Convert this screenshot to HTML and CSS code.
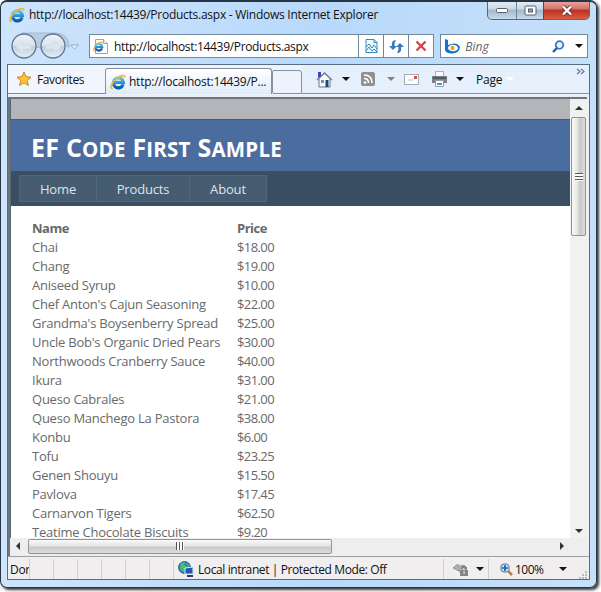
FILE: index.html
```html
<!DOCTYPE html>
<html lang="en">
<head>
<meta charset="utf-8">
<title>http://localhost:14439/Products.aspx - Windows Internet Explorer</title>
<link rel="stylesheet" href="styles.css">
</head>
<body>
<svg class="defs" aria-hidden="true">
  <defs>
    <linearGradient id="blue" x1="0" y1="0" x2="0" y2="1"><stop offset="0" stop-color="#58c7f2"/><stop offset="1" stop-color="#075baf"/></linearGradient>
    <symbol id="ie" viewBox="0 0 16 16">
      <path d="M13.2 10.3A5 5 0 1 1 13.4 8.4H5.2" fill="none" stroke="url(#blue)" stroke-width="3.2"/>
      <path d="M2.7 14.8C-.8 14.5 1.500 8.500 6.500 4.500 10.500 1.200 15.300.2 14.700 3.600" fill="none" stroke="#eeb72b" stroke-width="1.700"/>
    </symbol>
  </defs>
</svg>
<div class="window">
  <header class="titlebar">
    <svg class="title-icon" width="16" height="16"><use href="#ie"/></svg>
    <span class="title">http://localhost:14439/Products.aspx - Windows Internet Explorer</span>
    <div class="controls">
      <div class="control min"><svg width="14" height="8"><rect x="1.500" y="2.500" width="11" height="4" rx="1" fill="#fff" stroke="#526071"/></svg></div>
      <div class="control max"><svg width="13" height="11"><rect x="1" y="1" width="11" height="9" rx="1" fill="#fff" stroke="#526071"/><rect x="4.500" y="4" width="4" height="3" fill="#8ba1b8" stroke="#526071"/></svg></div>
      <div class="control close"><svg width="12" height="11"><path d="M2 1.500l8 8M10 1.500l-8 8" stroke="#633" stroke-width="4"/><path d="M2 1.500l8 8M10 1.500l-8 8" stroke="#fff" stroke-width="2.400"/></svg></div>
    </div>
  </header>
  <div class="address-row">
    <svg class="travel" width="70" height="30" viewBox="0 0 70 30">
      <defs><linearGradient id="orb" x1="0" y1="0" x2="0" y2="1"><stop stop-color="#edf3f8"/><stop offset=".48" stop-color="#d9e4ee"/><stop offset=".52" stop-color="#bdcedc"/><stop offset="1" stop-color="#e6f2fa"/></linearGradient></defs>
      <path d="M13 2h33q14 0 14 14-12-6-18 1h-9q-20-1-20-15" fill="#b9cde0" stroke="#a3b9cc"/>
      <circle cx="15" cy="15" r="12" fill="url(#orb)" stroke="#60798f" stroke-width="1.300"/>
      <circle cx="44" cy="15" r="12" fill="url(#orb)" stroke="#60798f" stroke-width="1.300"/>
      <path d="M7 16l7-6v4h8v4h-8v4zM52 16l-7-6v4h-8v4h8v4z" fill="#dde6ed" stroke="#d0dae3" stroke-width=".7"/>
      <path d="M61.500 14h8l-4 4z" fill="#eaf3fb" stroke="#8eacc6"/>
    </svg>
    <div class="address">
      <svg class="page-icon" width="16" height="17" viewBox="0 0 16 17"><path d="M2.500 1.500h8l4 4v10h-12z" fill="#fff" stroke="#a3a3a3"/><path d="M10.500 1.500v4h4" fill="#eee" stroke="#a3a3a3"/><svg x="0" y="3" width="11" height="11"><use href="#ie"/></svg></svg>
      <span class="url">http://localhost:14439/Products.aspx</span>
      <div class="tool"><svg width="13" height="14"><path d="M1 .5h8l3 3v10H1zM9 .5v3h3M1 8l3-3 3 4 2-3 3 4M1 12l3-4 3 4 2-2 3 3" fill="#effaff" stroke="#348abb"/></svg></div>
      <div class="tool"><svg width="17" height="15"><path d="M8 1Q3 1 4 7H1l4 4 4-4H6.500Q6 4 8 1z" fill="#3478bd"/><path d="M9 14q5 0 4-6h3l-4-4-4 4h2.500Q11 11 9 14z" fill="#3478bd"/></svg></div>
      <div class="tool"><svg width="12" height="12"><path d="M1.500 1.500l9 9M10.500 1.500l-9 9" stroke="#cf4444" stroke-width="2.300"/></svg></div>
    </div>
    <div class="search">
      <svg width="17" height="15"><path d="M1 0l3 1v5q9-4 12 2-1 7-9 6.500-6-.5-6-4z" fill="#1473cf"/><ellipse cx="9" cy="9" rx="5" ry="3.200" fill="#fff"/><circle cx="8.500" cy="9" r="2.200" fill="#f4a31b"/></svg>
      <span class="bing">Bing</span>
      <svg class="lens" width="13" height="13"><circle cx="7.500" cy="5" r="3.800" fill="#e9f5ff" stroke="#3c7ac2" stroke-width="1.800"/><path d="M5 8l-4 4" stroke="#245da8" stroke-width="2.400"/></svg>
      <i class="arrow"></i>
    </div>
  </div>
  <main class="inner">
    <div class="command-row">
      <div class="favorites">
        <svg width="16" height="16"><path d="M8 1l2 4.700 5 .5-3.800 3.300 1.200 5-4.400-2.700-4.500 2.700 1.300-5L1 6.200l5-.5z" fill="#ffc42e" stroke="#c78626"/></svg>
        <span class="fav-text">Favorites</span>
      </div>
      <div class="tab"><svg width="16" height="16"><use href="#ie"/></svg><span class="tab-text">http://localhost:14439/P...</span></div>
      <div class="new-tab"></div>
      <div class="commands">
        <svg class="home" width="17" height="17"><path d="M3 7v9h11V7L8.500 2z" fill="#f8fafc" stroke="#6d7682"/><path d="M1 9l7.500-7L16 9" fill="none" stroke="#788392" stroke-width="1.600"/><path d="M2 1h3v4L2 7z" fill="#3444c2"/><path d="M5 9h3v3H5z" fill="#5c9bc7"/><path d="M9.500 9h3v7h-3z" fill="#1d4973"/></svg>
        <i class="arrow a1"></i>
        <svg class="rss" width="14" height="14"><rect width="14" height="14" rx="2" fill="#919191"/><circle cx="4" cy="10.500" r="1.300" fill="#fff"/><path d="M3 6.500q4.500 0 4.500 4.500M3 3q8 0 8 8" fill="none" stroke="#fff" stroke-width="1.600"/></svg>
        <i class="arrow gray a2"></i>
        <svg class="mail" width="15" height="11"><rect x=".5" y=".5" width="14" height="10" fill="#fff" stroke="#a3adb9"/><path d="M10 2h3v3h-3z" fill="#d55044"/><path d="M4 6h5" stroke="#b7bdc6"/></svg>
        <svg class="print" width="17" height="16"><path d="M4.500.5h8v6h-8z" fill="#f9fafb" stroke="#a8afb7"/><path d="M1 5h15v7H1z" fill="#7a8085"/><path d="M2 7h13" stroke="#535b62" stroke-width="2"/><path d="M4.500 9.500h8v6h-8z" fill="#fff" stroke="#939da7"/><path d="M6 12h5v2H6z" fill="#469bc4"/></svg>
        <i class="arrow a3"></i>
        <span class="page">Page</span><i class="arrow white"></i>
        <svg class="chevrons" width="9" height="7"><path d="M1 1l3 2.500L1 6M5 1l3 2.500L5 6" fill="none" stroke="#6770ad" stroke-width="1.200"/></svg>
      </div>
    </div>
    <div class="viewport-frame">
      <div class="view">
        <div class="gray-band"></div>
        <div class="heading"><h1>EF C<small>ODE</small> F<small>IRST</small> S<small>AMPLE</small></h1></div>
        <nav><a class="nav-home">Home</a><a class="nav-products">Products</a><a class="nav-about">About</a></nav>
        <table>
          <thead><tr><th>Name</th><th>Price</th></tr></thead>
          <tbody>
            <tr><td>Chai</td><td>$18.00</td></tr>
            <tr><td>Chang</td><td>$19.00</td></tr>
            <tr><td>Aniseed Syrup</td><td>$10.00</td></tr>
            <tr><td>Chef Anton's Cajun Seasoning</td><td>$22.00</td></tr>
            <tr><td>Grandma's Boysenberry Spread</td><td>$25.00</td></tr>
            <tr><td>Uncle Bob's Organic Dried Pears</td><td>$30.00</td></tr>
            <tr><td>Northwoods Cranberry Sauce</td><td>$40.00</td></tr>
            <tr><td>Ikura</td><td>$31.00</td></tr>
            <tr><td>Queso Cabrales</td><td>$21.00</td></tr>
            <tr><td>Queso Manchego La Pastora</td><td>$38.00</td></tr>
            <tr><td>Konbu</td><td>$6.00</td></tr>
            <tr><td>Tofu</td><td>$23.25</td></tr>
            <tr><td>Genen Shouyu</td><td>$15.50</td></tr>
            <tr><td>Pavlova</td><td>$17.45</td></tr>
            <tr><td>Carnarvon Tigers</td><td>$62.50</td></tr>
            <tr><td>Teatime Chocolate Biscuits</td><td>$9.20</td></tr>
          </tbody>
        </table>
      </div>
      <div class="vscroll"><i class="sb up"></i><div class="vthumb"><i></i></div><i class="sb down"></i></div>
      <div class="hscroll"><i class="sb left"></i><div class="hthumb"><i></i></div><i class="sb right"></i></div>
      <div class="corner"></div>
    </div>
    <footer>
      <span class="done">Done</span>
      <i class="cell"></i><i class="cell"></i><i class="cell"></i><i class="cell"></i><i class="cell"></i><i class="cell"></i>
      <div class="zone">
        <svg width="16" height="16"><circle cx="6.500" cy="6.500" r="6" fill="#298bd0" stroke="#28649a"/><path d="M3 2l4-1-1 3 3 2-4 5-3-4zM9 2l3 3-2 1z" fill="#55bd57"/><path d="M7 7l8-1v7H7z" fill="#2356b2" stroke="#d2e9ff"/><path d="M9 15h6" stroke="#243b77" stroke-width="2"/></svg>
        <span class="zone-text">Local intranet | Protected Mode: Off</span>
      </div>
      <div class="privacy"><svg width="16" height="15"><path d="M0 6l5-4v3q5-4 9 1l-2 1Q9 4 6 8l2 2z" fill="#b1b1b1" stroke="#929292"/><path d="M9 8V6q2.500-3 4 0v2" fill="none" stroke="#777" stroke-width="1.400"/><rect x="7" y="8" width="8" height="6" fill="#858585"/><path d="M11 9v3" stroke="#eee"/></svg><i class="arrow"></i></div>
      <div class="zoom"><svg width="13" height="13"><path d="M8 8l4 4" stroke="#b7823d" stroke-width="2.500"/><circle cx="5" cy="5" r="4.200" fill="#cdeaff" stroke="#6c8da9" stroke-width="1.300"/><path d="M5 2v6M2 5h6" stroke="#2359b5" stroke-width="1.700"/></svg><span class="zoom-text">100%</span><i class="arrow"></i></div>
      <svg class="grip" width="8" height="8"><path d="M6 0h2v2H6zM3 3h2v2H3zM6 3h2v2H6zM0 6h2v2H0zM3 6h2v2H3zM6 6h2v2H6z" fill="#b6babd"/></svg>
    </footer>
  </main>
</div>
</body>
</html>
```
FILE: styles.css
```css
* { box-sizing: border-box; }
body { margin: 0; width: 601px; height: 592px; overflow: hidden; background: #fff; font-family: "Open Sans", "Noto Sans", sans-serif; font-size: 12px; color: #111; }
.defs { position: absolute; width: 0; height: 0; }
svg { display: block; flex: none; }
span { white-space: nowrap; }
.window { width: 597px; height: 588px; border: 1px solid #253545; border-top-width: 2px; border-radius: 7px; box-shadow: 2px 2px 3px #333; background: linear-gradient(90deg, #cde4fc, #b8d9fb 55%, #c6e0fa); padding: 0 6px 7px; overflow: hidden; display: flex; flex-direction: column; }
.titlebar { height: 29px; flex: none; display: flex; align-items: flex-start; }
.title-icon { margin: 5px 4px 0 2px; }
.title { font-size: 12px; line-height: 16px; margin-top: 5px; width: 350px; letter-spacing: -.26px; }
.controls { display: flex; margin: -1px 0 0 auto; width: 103px; height: 19px; border: 1px solid #586879; border-top: 0; border-radius: 0 0 5px 5px; overflow: hidden; background: linear-gradient(#e4edf6, #cbd8e5 45%, #a1b7cb 50%, #c8dbea); }
.control { display: flex; align-items: center; justify-content: center; }
.min { width: 28px; }
.max { width: 27px; border-left: 1px solid #718194; }
.close { flex: 1; border-left: 1px solid #604044; background: linear-gradient(#e9aaa0, #d57166 45%, #b92f25 50%, #d85d3e); }
.address-row { height: 33px; flex: none; display: flex; padding: 3px 2px 0; }
.travel { margin: -3px 10px 0 0; }
.address { width: 346px; height: 24px; border: 1px solid #71889d; background: #fff; display: flex; align-items: center; }
.page-icon { margin: 0 5px 0 3px; }
.url { flex: 1; font-size: 12px; letter-spacing: -.33px; }
.tool { width: 25px; height: 22px; border-left: 1px solid #71889d; display: flex; align-items: center; justify-content: center; }
.search { margin-left: 6px; width: 148px; height: 24px; border: 1px solid #71889d; background: #fff; display: flex; align-items: center; padding-left: 3px; }
.bing { font-size: 12px; font-style: italic; color: #666; margin-left: 4px; }
.lens { margin-left: auto; margin-right: 10px; }
.arrow { flex: none; width: 0; height: 0; border: 4px solid transparent; border-top-color: #111; border-bottom: 0; }
.search .arrow { margin-right: 4px; }
.inner { flex: 1; min-height: 0; border: 1px solid #566d82; background: #edf4fd; display: flex; flex-direction: column; }
.command-row { height: 32px; flex: none; display: flex; border-bottom: 2px solid #e8eef8; }
.favorites { width: 97px; height: 29px; border-bottom: 1px solid #808c99; display: flex; align-items: center; padding-left: 8px; background: #f1f6fe; }
.fav-text { margin-left: 5px; font-size: 12px; letter-spacing: -.4px; }
.tab { width: 167px; height: 26px; margin-top: 3px; border: 1px solid #8590a0; border-bottom: 0; border-radius: 3px 3px 0 0; display: flex; align-items: center; padding-left: 4px; background: linear-gradient(#fff, #dfebfa); }
.tab-text { margin-left: 3px; letter-spacing: -.25px; }
.new-tab { width: 30px; height: 24px; margin-top: 5px; border: 1px solid #8590a0; border-radius: 2px 3px 0 2px; background: #edf3fd; }
.commands { flex: 1; height: 29px; border-bottom: 1px solid #8590a0; background: #e6effc; display: flex; align-items: center; padding-left: 14px; }
.a1 { margin: 0 11px 0 9px; }
.gray { border-top-color: #7e8288; }
.a2 { margin: 0 9px 0 12px; }
.print { margin-left: 12px; }
.a3 { margin: 0 12px 0 8px; }
.page { font-size: 12px; width: 27px; letter-spacing: -.2px; }
.white { border-top-color: #fff; margin-left: 3px; }
.chevrons { margin: -15px 4px 0 auto; }
.viewport-frame { height: 459px; flex: none; margin: 0 2px 0 0; border: 2px solid #71757a; border-right: 0; border-bottom: 0; display: grid; grid-template: 439px 18px / 560px 19px; background: #eee; }
.view { background: #fff; overflow: hidden; border-left: 1px solid #536676; }
.gray-band { height: 20px; background: #b4b5b9; }
.heading { height: 52px; background: #4b6c9f; border-top: 1px solid #395c8e; padding-left: 20px; }
h1 { margin: 0; color: #fff; font-size: 25px; line-height: 55px; font-weight: 700; letter-spacing: .22px; white-space: nowrap; }
h1 small { font-size: 20.5px; }
nav { height: 35px; background: #3a4f63; padding: 4px 8px; display: flex; }
nav a { display: flex; align-items: center; justify-content: center; height: 27px; border: 1px solid #4e677d; background: #465c71; color: #dde4ec; font-size: 13px; letter-spacing: -.15px; }
.nav-home { width: 78px; }
.nav-products { width: 93px; border-left: 0; }
.nav-about { width: 77px; border-left: 0; }
table { margin: 13px 0 0 21px; border-collapse: collapse; color: #696969; font-size: 13px; line-height: 19px; letter-spacing: -.23px; }
th, td { padding: 0; text-align: left; white-space: nowrap; height: 19px; }
th:first-child { width: 205px; }
td:last-child { letter-spacing: -.6px; }
th { font-weight: 700; letter-spacing: -.5px; }
.vscroll { display: flex; flex-direction: column; align-items: center; background: #f1f1f1; padding: 7px 2px 5px 0; }
.sb { flex: none; width: 0; height: 0; border: 4px solid transparent; }
.up { border-bottom-color: #333; border-top: 0; }
.down { border-top-color: #333; border-bottom: 0; margin-top: auto; }
.left { border-right-color: #333; border-left: 0; }
.right { border-left-color: #333; border-right: 0; margin-left: auto; }
.vthumb { width: 15px; height: 119px; margin-top: 7px; border: 1px solid #929292; border-radius: 2px; background: linear-gradient(90deg, #fafafa, #e8e8e8 40%, #c8c8c8 60%, #ddd); display: flex; align-items: center; justify-content: center; }
.vthumb i { width: 8px; height: 8px; background: repeating-linear-gradient(#555 0 1px, #fff 1px 3px); }
.hscroll { display: flex; align-items: center; background: #eee; padding: 0 6px 2px; }
.hthumb { width: 304px; height: 15px; margin-left: 8px; border: 1px solid #929292; border-radius: 2px; background: linear-gradient(#fafafa, #e4e4e4 45%, #c9c9c9 55%, #ddd); display: flex; align-items: center; justify-content: center; }
.hthumb i { width: 8px; height: 8px; background: repeating-linear-gradient(90deg, #555 0 1px, #fff 1px 3px); }
.corner { background: #eee; }
footer { flex: 1; min-height: 0; border-top: 1px solid #9aa0a5; background: #f0eeef; display: flex; align-items: center; padding: 2px 0 0 2px; }
.done { width: 19px; overflow: hidden; line-height: 17px; letter-spacing: -.3px; }
.cell { width: 24px; height: 20px; border-left: 1px solid #cfd1d5; flex: none; }
.zone { width: 270px; height: 20px; border-left: 1px solid #cfd1d5; display: flex; align-items: center; padding-left: 4px; }
.zone-text { margin-left: 4px; letter-spacing: -.4px; }
.privacy { width: 45px; height: 20px; border-left: 1px solid #cfd1d5; display: flex; align-items: center; padding-left: 9px; }
.privacy .arrow { margin-left: 7px; }
.zoom { width: 90px; height: 20px; border-left: 1px solid #cfd1d5; display: flex; align-items: center; padding-left: 11px; }
.zoom-text { width: 30px; margin-left: 2px; letter-spacing: -.5px; }
.zoom .arrow { margin-left: 14px; }
.grip { margin: 11px 2px 0 auto; }
```
